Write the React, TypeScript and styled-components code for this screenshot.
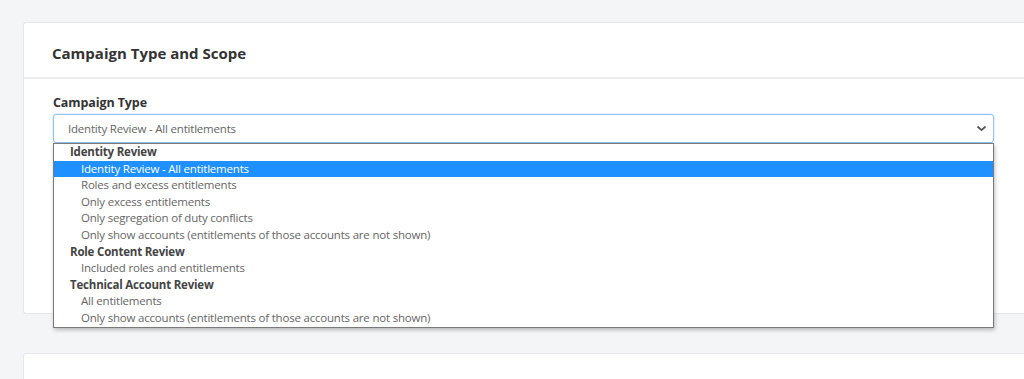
import React from 'react';
import styled, { createGlobalStyle } from 'styled-components';

const GlobalStyle = createGlobalStyle`
  html, body {
    margin: 0;
    padding: 0;
    background: #f4f5f7;
    font-family: 'Open Sans', 'Noto Sans', sans-serif;
    color: #333;
  }
`;

type Option = { label: string; group?: boolean; selected?: boolean };

const options: Option[] = [
  { label: 'Identity Review', group: true },
  { label: 'Identity Review - All entitlements', selected: true },
  { label: 'Roles and excess entitlements' },
  { label: 'Only excess entitlements' },
  { label: 'Only segregation of duty conflicts' },
  { label: 'Only show accounts (entitlements of those accounts are not shown)' },
  { label: 'Role Content Review', group: true },
  { label: 'Included roles and entitlements' },
  { label: 'Technical Account Review', group: true },
  { label: 'All entitlements' },
  { label: 'Only show accounts (entitlements of those accounts are not shown)' },
];

const App: React.FC = () => {
  return (
    <>
      <GlobalStyle />
      <Page>
        <Card>
          <CardHeader>
            <Title>Campaign Type and Scope</Title>
          </CardHeader>
          <CardBody>
            <Label>Campaign Type</Label>
            <SelectWrap>
              <Select>
                <SelectValue>Identity Review - All entitlements</SelectValue>
                <svg width="11" height="7" viewBox="0 0 11 7">
                  <path d="M1.5 1.5l4 3.6 4-3.6" fill="none" stroke="#555" strokeWidth="1.8" />
                </svg>
              </Select>
              <Menu>
                {options.map((o, i) => (
                  <MenuItem key={i} $group={o.group} $selected={o.selected}>
                    {o.label}
                  </MenuItem>
                ))}
              </Menu>
            </SelectWrap>
          </CardBody>
        </Card>
        <Card $short />
      </Page>
    </>
  );
};

export default App;

const Page = styled.div`
  display: flex;
  flex-direction: column;
  gap: 39px;
  padding: 22px 0 0 23px;
  height: 379px;
  box-sizing: border-box;
  overflow: hidden;
`;

const Card = styled.div<{ $short?: boolean }>`
  background: #fff;
  border: 1px solid #e6e7e9;
  border-right: none;
  border-radius: 3px 0 0 3px;
  flex-shrink: 0;
  height: ${({ $short }) => ($short ? '60px' : 'auto')};
`;

const CardHeader = styled.div`
  height: 56px;
  box-sizing: border-box;
  display: flex;
  align-items: center;
  padding: 6px 0 0 28px;
  border-bottom: 2px solid #ececee;
`;

const Title = styled.h2`
  margin: 0;
  font-size: 15px;
  font-weight: 700;
  color: #333;
`;

const CardBody = styled.div`
  padding: 15px 29px 0 29px;
  height: 234px;
  box-sizing: border-box;
`;

const Label = styled.div`
  font-size: 12.5px;
  font-weight: 700;
  color: #333;
  margin-bottom: 3px;
  letter-spacing: -0.1px;
`;

const SelectWrap = styled.div`
  position: relative;
  width: 941px;
`;

const Select = styled.div`
  height: 29px;
  box-sizing: border-box;
  border: 1px solid #8fc3f0;
  border-radius: 3px;
  box-shadow: 0 0 2px rgba(100, 170, 235, 0.5);
  display: flex;
  align-items: center;
  justify-content: space-between;
  padding: 0 6px 0 14px;
`;

const SelectValue = styled.span`
  font-size: 11.5px;
  color: #666;
  letter-spacing: -0.2px;
`;

const Menu = styled.div`
  position: absolute;
  top: 29px;
  left: 0;
  right: 0;
  background: #fff;
  border: 1px solid #7a7a7a;
  box-shadow: 1px 2px 4px rgba(0, 0, 0, 0.25);
  padding: 0;
`;

const MenuItem = styled.div<{ $group?: boolean; $selected?: boolean }>`
  height: 16.6px;
  line-height: 16.6px;
  font-size: 11.5px;
  letter-spacing: -0.2px;
  white-space: nowrap;
  padding-left: ${({ $group }) => ($group ? '16px' : '27px')};
  font-weight: ${({ $group }) => ($group ? 700 : 400)};
  color: ${({ $group, $selected }) => ($selected ? '#fff' : $group ? '#444' : '#666')};
  background: ${({ $selected }) => ($selected ? '#1e90ff' : 'transparent')};
`;
